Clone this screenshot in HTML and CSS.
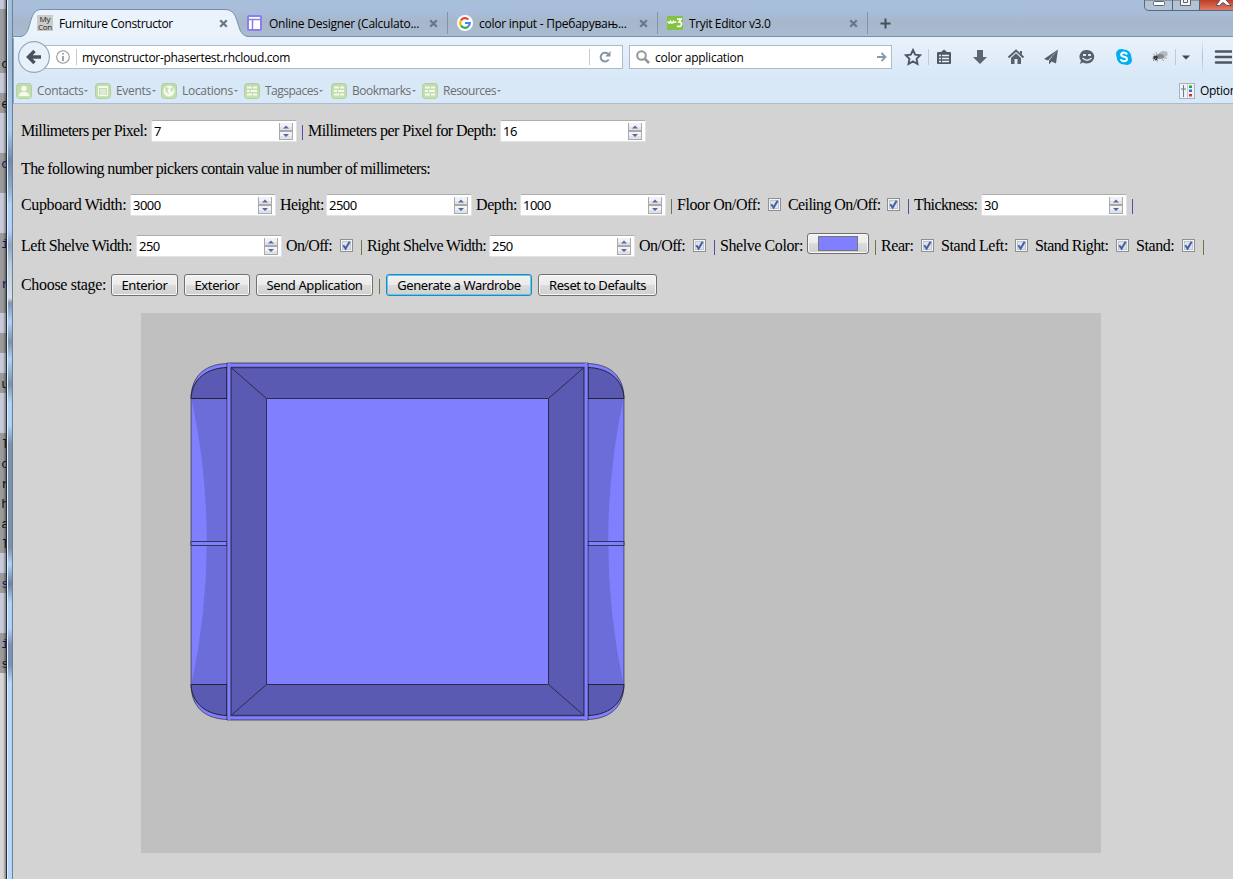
FILE: index.html
```html
<!DOCTYPE html>
<html lang="en">
<head>
<meta charset="utf-8">
<title>Furniture Constructor</title>
<link rel="stylesheet" href="styles.css">
</head>
<body>
<svg class="defs" width="0" height="0">
  <defs>
    <linearGradient id="green" x1="0" y1="0" x2="0" y2="1"><stop offset="0" stop-color="#c2d9b0"/><stop offset="1" stop-color="#c5e2ac"/></linearGradient>
    <symbol id="close" viewBox="0 0 9 9"><path d="M1.2 1.2L7.8 7.8M7.8 1.2L1.2 7.8" stroke="#66788a" stroke-width="2.2"/></symbol>
    <symbol id="list" viewBox="0 0 16 16"><rect x=".5" y=".5" width="15" height="15" rx="3" fill="url(#green)" stroke="#b1cea4"/><path d="M3 4.500h5M9 4.500h4M3 8h3M7 8h6M3 11.500h5M9 11.500h4" stroke="#f4faed" stroke-width="2"/></symbol>
    <symbol id="check" viewBox="0 0 13 13"><rect x=".5" y=".5" width="12" height="12" fill="#f4f4f4" stroke="#8e8f8f"/><rect x="2.500" y="2.500" width="8" height="8" fill="#dfe3ec" stroke="#bfc5d2"/><path d="M3.300 6.300L5.600 9.600L9.600 2.700" fill="none" stroke="#4660a4" stroke-width="2"/></symbol>
    <symbol id="spin" viewBox="0 0 14 17"><path d="M0 0h14v17h-14z" fill="#a9a9ad"/><path d="M1 0h12v7h-12zM1 9h12v7h-12z" fill="#f2f2f2"/><path d="M1 4h12v3h-12zM1 13h12v3h-12z" fill="#e2e2e4"/><path d="M4 5.500L7 2.500L10 5.500zM4 11L7 14L10 11z" fill="#5268ad"/></symbol>
  </defs>
</svg>
<div class="desktop">
  <div class="behind">
    <span class="code c1">c</span><span class="code c2">e</span><span class="code c3 navy">c</span><span class="code c4 navy">i</span><span class="code c5 navy">r</span><span class="code c6">u</span><span class="code c7">l</span><span class="code c8">c</span><span class="code c9">r</span><span class="code c10">h</span><span class="code c11">a</span><span class="code c12">l</span><span class="code c13 navy">s</span><span class="code c14 navy">i</span><span class="code c15">s</span>
  </div>
  <div class="edge"></div>
  <div class="browser">
    <div class="tabs">
      <svg class="tabshape" width="240" height="38" viewBox="0 0 240 38"><path d="M0 36.500H7C20 36.500 14 9.500 28 9.500H212C229 9.500 221 36.500 236 36.500V38H0Z" fill="#eaf2fb"/><path d="M0 36.500H7C20 36.500 14 9.500 28 9.500H212C229 9.500 221 36.500 236 36.500" fill="none" stroke="#768fac"/></svg>
      <div class="tab current"><span class="mycon"><span>My</span><span>Con</span></span><span class="title t1">Furniture Constructor</span><svg class="x"><use href="#close"/></svg></div>
      <div class="tab"><svg class="ico" viewBox="0 0 16 16"><rect x="1" y="1" width="13" height="14" rx="1" fill="#fff" stroke="#8d7fea" stroke-width="2"/><path d="M2 4.500H13M5.500 5V14" stroke="#8d7fea" stroke-width="1.500"/></svg><span class="title">Online Designer (Calculato...</span><svg class="x"><use href="#close"/></svg></div>
      <div class="tab"><svg class="ico" viewBox="0 0 16 16"><circle cx="8" cy="8" r="8" fill="#fff"/><g fill="none" stroke-width="2.200"><path d="M4 5.300A4.800 4.800 0 0 1 11.300 4.500" stroke="#ea4335"/><path d="M4 5.300A4.800 4.800 0 0 0 4 10.700" stroke="#fbbc05"/><path d="M4 10.700A4.800 4.800 0 0 0 11.200 11.500" stroke="#34a853"/><path d="M11.200 11.500A4.800 4.800 0 0 0 12.800 8H8" stroke="#4285f4"/></g></svg><span class="title">color input - Пребарувањ...</span><svg class="x"><use href="#close"/></svg></div>
      <div class="tab"><svg class="ico" viewBox="0 0 16 16"><rect y="1" width="16" height="14" rx="1" fill="#84c341"/><path d="M1 6.500Q2 9.500 3.500 6.500Q5 9.500 6.500 6.500Q8 8 9 6.500M10 4H14L12 7Q15 7 14.500 9.500Q13.500 12.500 10 11" fill="none" stroke="#fff" stroke-width="1.700"/></svg><span class="title t4">Tryit Editor v3.0</span><svg class="x"><use href="#close"/></svg></div>
      <svg class="plus" width="11" height="11" viewBox="0 0 11 11"><path d="M5.500 .5V10.500M.5 5.500H10.500" stroke="#44505e" stroke-width="2"/></svg>
      <svg class="wincontrols" width="90" height="11" viewBox="0 0 90 11"><defs><linearGradient id="red" x1="0" y1="0" x2="0" y2="1"><stop offset="0" stop-color="#bd3b27"/><stop offset="1" stop-color="#df7c63"/></linearGradient></defs><path d="M.5 0V6Q.5 10.500 5 10.500H90V0Z" fill="#b4c3d4" stroke="#59697a"/><path d="M55 0H90V10H55Z" fill="url(#red)"/><path d="M28.500 0V10M55.500 0V10" stroke="#56616d"/><rect x="9.500" y="1.500" width="11" height="4" rx="1" fill="#fff" stroke="#5a6470"/><path d="M36.500 0V5.500H46.500V0M39.500 0V2.500H43.500V0" fill="#f4f4f4" stroke="#5a6470"/><path d="M75.500 5.500L79 2.500L83 5.500H87L82 0L81 -2H77L76 0L72 5.500Z" fill="#fff" stroke="#5a5061"/></svg>
    </div>
    <div class="chrome">
      <div class="nav">
        <div class="urlbar">
          <svg class="info" width="14" height="14" viewBox="0 0 14 14"><circle cx="7" cy="7" r="6.300" fill="none" stroke="#969696" stroke-width="1.100"/><path d="M7 6V11M7 3V4.500" stroke="#858585" stroke-width="1.500"/></svg>
          <i class="vline"></i><span class="address">myconstructor-phasertest.rhcloud.com</span><i class="vline"></i>
          <svg class="reload" width="12" height="12" viewBox="0 0 12 12"><path d="M9.700 8.500A4.400 4.400 0 1 1 9 2.800" fill="none" stroke="#8296a5" stroke-width="2"/><path d="M11.500 0V5.500H6.200Z" fill="#8296a5"/></svg>
        </div>
        <svg class="back" width="32" height="32" viewBox="0 0 32 32"><circle cx="16" cy="16" r="15.400" fill="#e8f1fa" stroke="#94a8bd" stroke-width="1.200"/><path d="M23 16H12M16.500 10L10.500 16L16.500 22" fill="none" stroke="#46525f" stroke-width="3.400"/></svg>
        <div class="search"><svg width="14" height="14" viewBox="0 0 14 14"><circle cx="5.500" cy="5.500" r="4.300" fill="none" stroke="#969696" stroke-width="2"/><path d="M8.500 8.500L13 13" stroke="#969696" stroke-width="2.600"/></svg><span class="query">color application</span><svg width="10" height="10" viewBox="0 0 10 10"><path d="M0 5H8M4.500 1L8.500 5L4.500 9" fill="none" stroke="#8799aa" stroke-width="1.800"/></svg></div>
        <div class="tools">
          <svg viewBox="0 0 18 18"><path d="M9 2L11.200 6.600L16.200 7.300L12.600 10.800L13.500 16L9 13.400L4.500 16L5.400 10.800L1.800 7.300L6.800 6.600Z" fill="none" stroke="#4d5966" stroke-width="1.900"/></svg>
          <i class="vline"></i>
          <svg viewBox="0 0 18 18"><path d="M3 4H6L9 1.500L12 4H15Q16 4 16 5V15Q16 16 15 16H3Q2 16 2 15V5Q2 4 3 4Z" fill="#4d5966"/><path d="M4 7.500H6M7 7.500H14M4 10.500H6M7 10.500H14M4 13.500H6M7 13.500H14" stroke="#e9f1f9" stroke-width="1.700"/></svg>
          <svg viewBox="0 0 18 18"><path d="M6 2H12V9H16L9 16L2 9H6Z" fill="#5a6570"/></svg>
          <svg viewBox="0 0 18 18"><path d="M1.500 9.500L9 2.500L16.500 9.500" fill="none" stroke="#56616d" stroke-width="2"/><path d="M4 10L9 5.300L14 10V16H10.500V11H7.500V16H4ZM13 3H15V7L13 5Z" fill="#56616d"/></svg>
          <svg viewBox="0 0 18 18"><path d="M16 1.500L2 11L6 12.500ZM16 1.500L7 12.500V16.500L9.500 13.500L14 15.500Z" fill="#56616d"/></svg>
          <svg viewBox="0 0 18 18"><path d="M9 2A7 6.500 0 0 1 9 15.500Q6.500 15.500 5 14.500L2 16L3 12.500A7 6.500 0 0 1 9 2Z" fill="#56616d"/><path d="M5 6H8V8H5ZM10 6H13V8H10Z" fill="#dce6ef"/><path d="M4.500 10Q9 14.500 13.500 10" fill="none" stroke="#dce6ef" stroke-width="1.400"/></svg>
          <svg class="skype" viewBox="0 0 18 18"><circle cx="6" cy="6" r="5" fill="#00aff0"/><circle cx="12" cy="12" r="5" fill="#00aff0"/><circle cx="9" cy="9" r="7.400" fill="#00aff0"/><path d="M12 6.500Q11.200 4.500 8.900 4.500Q6.200 4.600 6.200 6.700Q6.300 8.200 9 8.700Q12 9.200 12 11.200Q11.700 13.300 9 13.300Q6.500 13.200 5.900 11.200" fill="none" stroke="#fff" stroke-width="2.100"/></svg>
          <svg viewBox="0 0 18 18"><ellipse cx="12" cy="6.500" rx="5" ry="3.300" fill="#b6b9bd" transform="rotate(-15 12 7)"/><ellipse cx="9" cy="8.500" rx="4" ry="2.500" fill="#85878c"/><circle cx="4.500" cy="10" r="2.400" fill="#33363a"/><path d="M2 6L5 8M2 13L5 10M7 10L6 14M9 9L13 13M13 10H16M6 7L5 4M1 10H3" stroke="#a0a3a8"/></svg>
          <i class="vline"></i>
          <svg class="drop" width="8" height="5" viewBox="0 0 8 5"><path d="M0 .5H8L4 4.500Z" fill="#3c4650"/></svg>
          <i class="longline"></i>
          <svg viewBox="0 0 18 18"><path d="M2 3.500H18M2 9H18M2 14.500H18" stroke="#4c5763" stroke-width="2.600" stroke-linecap="round"/></svg>
        </div>
      </div>
      <div class="bookmarks">
        <span class="bm b1"><svg viewBox="0 0 16 16"><rect x=".5" y=".5" width="15" height="15" rx="3" fill="url(#green)" stroke="#b1cea4"/><circle cx="8" cy="5.500" r="2.700" fill="#f4faed"/><path d="M3 13V11L6 9H10L13 11V13Z" fill="#f4faed"/></svg><b>Contacts</b><i class="arrow"></i></span>
        <span class="bm b2"><svg viewBox="0 0 16 16"><rect x=".5" y=".5" width="15" height="15" rx="3" fill="url(#green)" stroke="#b1cea4"/><rect x="3.500" y="3.500" width="9" height="9" fill="none" stroke="#f4faed"/><path d="M4 4.500H12M5 7H11M5 9H11M5 11H11" stroke="#f4faed"/></svg><b>Events</b><i class="arrow"></i></span>
        <span class="bm b3"><svg viewBox="0 0 16 16"><rect x=".5" y=".5" width="15" height="15" rx="3" fill="url(#green)" stroke="#b1cea4"/><circle cx="8" cy="8" r="5.600" fill="#f4faed"/><path d="M5 4L8 5L6.500 7.500L8 11L6 10L4 7ZM11 4L9 7L11 9L12.500 6Z" fill="#c6dfb2"/></svg><b>Locations</b><i class="arrow"></i></span>
        <span class="bm b4"><svg><use href="#list"/></svg><b>Tagspaces</b><i class="arrow"></i></span>
        <span class="bm b5"><svg><use href="#list"/></svg><b>Bookmarks</b><i class="arrow"></i></span>
        <span class="bm b6"><svg><use href="#list"/></svg><b>Resources</b><i class="arrow"></i></span>
        <span class="bm options"><svg viewBox="0 0 16 16"><rect x=".5" y=".5" width="15" height="15" fill="#eef1f5" stroke="#a7b2be"/><path d="M4.500 2V14M2 6H7" stroke="#727a82"/><path d="M8.500 1V15" stroke="#c8ced6"/><path d="M10 2.500H13V5H10Z" fill="#28a32b"/><path d="M10 6.500H13V9H10Z" fill="#287ad0"/><path d="M10 11H13V13.500H10Z" fill="#df3029"/></svg><b>Options</b></span>
      </div>
    </div>
    <main class="page">
      <div class="row scale"><label>Millimeters per Pixel:</label><span class="num">7<svg><use href="#spin"/></svg></span><i class="bar"></i><label class="wide">Millimeters per Pixel for Depth:</label><span class="num">16<svg><use href="#spin"/></svg></span></div>
      <div class="row note"><label>The following number pickers contain value in number of millimeters:</label></div>
      <div class="row sizes"><label class="wide">Cupboard Width:</label><span class="num">3000<svg><use href="#spin"/></svg></span><label class="tight">Height:</label><span class="num">2500<svg><use href="#spin"/></svg></span><label>Depth:</label><span class="num">1000<svg><use href="#spin"/></svg></span><i class="bar"></i><label>Floor On/Off:</label><svg class="cb"><use href="#check"/></svg><label class="tight">Ceiling On/Off:</label><svg class="cb"><use href="#check"/></svg><i class="bar blue"></i><label class="tight">Thickness:</label><span class="num">30<svg><use href="#spin"/></svg></span><i class="bar blue"></i></div>
      <div class="row shelves"><label class="tight">Left Shelve Width:</label><span class="num">250<svg><use href="#spin"/></svg></span><label class="tight">On/Off:</label><svg class="cb"><use href="#check"/></svg><i class="bar"></i><label class="tight">Right Shelve Width:</label><span class="num">250<svg><use href="#spin"/></svg></span><label class="tight">On/Off:</label><svg class="cb"><use href="#check"/></svg><i class="bar blue"></i><label>Shelve Color:</label><span class="btn color"><i class="swatch"></i></span><i class="bar"></i><label>Rear:</label><svg class="cb"><use href="#check"/></svg><label>Stand Left:</label><svg class="cb"><use href="#check"/></svg><label class="tight">Stand Right:</label><svg class="cb"><use href="#check"/></svg><label>Stand:</label><svg class="cb"><use href="#check"/></svg><i class="bar"></i></div>
      <div class="row stage"><label>Choose stage:</label><span class="btn">Enterior</span><span class="btn">Exterior</span><span class="btn">Send Application</span><i class="bar"></i><span class="btn focus">Generate a Wardrobe</span><span class="btn">Reset to Defaults</span></div>
      <svg class="canvas" width="960" height="540" viewBox="141 313 960 540">
        <defs>
          <g id="wing">
            <path d="M191 399C191 375 206 363.500 229 363.500V719.500C206 719.500 191 708 191 684Z" fill="#8080ff" stroke="#000" stroke-opacity=".5"/>
            <path d="M191.500 398.500Q222 541 191.500 684.500H227V398.500Z" fill="#6d6dd9"/>
            <path d="M191 398.500C192 378 208 368 227 367.500V398.500ZM191 684.500C192 705 208 715 227 715.500V684.500Z" fill="#5a5ab2" stroke="#222238"/>
            <path d="M191 541.500H227V545.500H191Z" fill="#8080ff" stroke="#333360"/>
          </g>
        </defs>
        <use href="#wing"/><use href="#wing" transform="translate(815 0) scale(-1 1)"/>
        <path d="M227 363H588V720H227Z" fill="#8080ff" stroke="#000" stroke-opacity=".55"/>
        <path d="M231 367.500H584V715.500H231Z" fill="#5a5ab2" stroke="#343462" stroke-width="1.500"/>
        <path d="M231 367.500L266.500 398.500M584 367.500L548.500 398.500M231 715.500L266.500 684.500M584 715.500L548.500 684.500" stroke="#2b2b50"/>
        <path d="M266.500 398.500H548.500V684.500H266.500Z" fill="#8080ff" stroke="#2b2b50"/>
        <path d="M229 363V720M586 363V720" stroke="#8080ff" stroke-width="2.500"/>
      </svg>
    </main>
  </div>
</div>
</body>
</html>
```

FILE: styles.css
```css
* { box-sizing: border-box; }
body { margin: 0; width: 1233px; height: 879px; overflow: hidden; background: #d3d3d3; }
svg { display: block; flex: none; }
.defs { position: absolute; }
.desktop { display: flex; width: 1233px; height: 879px; overflow: hidden; }
.behind { position: relative; flex: none; width: 7px; overflow: hidden; background: linear-gradient(90deg, transparent 3px, rgba(0,0,0,.5)), linear-gradient(#c4c8d8 9px, #9b9da0 9px 73px, #c9cad7 73px 93px, #9b9b9b 93px 113px, #c9cad7 113px 153px, #9b9b9b 153px 193px, #c9cad7 193px 233px, #9b9b9b 233px 313px, #c9cad7 313px 333px, #9b9b9b 333px 353px, #c9cad7 353px 373px, #9b9b9b 373px 393px, #c9cad7 393px 433px, #9b9b9b 433px 553px, #c9cad7 553px 573px, #9b9b9b 573px 593px, #c9cad7 593px 633px, #9b9b9b 633px 673px, #d6d6d6 673px); }
.code { position: absolute; right: -2px; font: 13px/16px "Liberation Mono", monospace; color: #161010; }
.navy { color: #181060; }
.c1 { top: 57px; } .c2 { top: 97px; } .c3 { top: 157px; } .c4 { top: 237px; } .c5 { top: 277px; }
.c6 { top: 377px; } .c7 { top: 437px; } .c8 { top: 457px; } .c9 { top: 477px; } .c10 { top: 497px; }
.c11 { top: 517px; } .c12 { top: 537px; } .c13 { top: 577px; } .c14 { top: 637px; } .c15 { top: 657px; }
.edge { flex: none; width: 6px; border-left: 1px solid #e3f0fc; border-right: 1px solid #6b8299; background: linear-gradient(#a5bfda 0, #9eb7d0 60px, #a9caf0 130px, #7188ab 160px, #8ca6c3 185px, #b1d2f8 205px 230px, #8ba5c3 245px, #bccbd9 265px, #d5dde5 298px, #7e95ad 303px, #afd1f8 322px, #7b91aa 342px, #afd1f8 359px, #7b91aa 384px, #afd1f8 402px 425px, #7b91aa 444px 548px, #afd1f8 564px, #6e82ab 584px, #afd1f8 602px 628px, #7b91b3 645px 665px, #b5d7fb 682px); box-shadow: -1px 0 #202c3a; position: relative; }
.browser { width: 1220px; flex: none; font: 12px/16px "Open Sans", "Noto Sans", sans-serif; color: #000; }
.tabs { position: relative; display: flex; height: 37px; padding-left: 15px; background: linear-gradient(#a8bfda 0, #a8bedb 10px, #a6b7cb 22px, #a9bbd0 36px); border-bottom: 1px solid #768fac; }
.tabshape { position: absolute; left: 0; top: 0; z-index: 1; }
.tab { position: relative; flex: none; display: flex; align-items: center; width: 210px; height: 22px; margin-top: 12px; padding: 0 9px; border-right: 1px solid #8393a6; }
.tab.current { z-index: 2; border-right-color: transparent; }
.ico { width: 16px; height: 16px; }
.mycon { display: flex; flex-direction: column; align-items: center; width: 16px; height: 16px; background: #cbcbc9; font: 8px/8px "Open Sans", sans-serif; color: #222; letter-spacing: -.2px; }
.title { flex: none; width: 160px; margin-left: 6px; padding-top: 1px; white-space: nowrap; letter-spacing: -.25px; }
.t1 { letter-spacing: -.38px; }
.t4 { letter-spacing: -.35px; }
.x { width: 9px; height: 9px; margin-left: -.5px; }
.plus { margin: 18px 0 0 12px; }
.wincontrols { position: absolute; right: -1px; top: 0; }
.chrome { height: 67px; background: linear-gradient(#e9f2fb, #d9e8f7 60%); border-bottom: 1px solid #a6bdd3; border-left: 1px solid #8ea3ba; overflow: hidden; }
.nav { position: relative; display: flex; align-items: center; height: 40px; padding-left: 31px; }
.nav > * { flex: none; }
.back { position: absolute; left: 4px; top: 4px; }
.urlbar, .search { display: flex; align-items: center; height: 24px; background: #fff; border: 1px solid #a9bccf; }
.urlbar { width: 578px; padding-left: 10px; }
.vline { width: 1px; height: 16px; background: #c3c9d0; flex: none; }
.info { margin-right: 6px; }
.address { flex: none; width: 512px; padding: 1px 0 0 5px; white-space: nowrap; letter-spacing: -.3px; }
.reload { margin-left: 9px; }
.search { width: 263px; margin-left: 6px; padding: 0 4px 0 6px; }
.query { flex: 1; padding: 1px 0 0 5px; letter-spacing: -.25px; }
.tools { display: flex; align-items: center; padding-left: 12px; }
.tools > svg { width: 18px; height: 18px; margin-right: 18px; }
.tools > .vline { margin-right: 6px; }
.tools > svg:nth-child(1), .tools > svg:nth-child(9) { margin-right: 6px; }
.tools > svg:nth-child(7) { margin-right: 19px; }
.tools > svg:nth-child(5) { margin-right: 17px; }
.tools > .drop { width: 8px; height: 5px; margin: 0 12px 0 0; }
.longline { width: 1px; height: 38px; margin-right: 11px; background: linear-gradient(transparent, #b0c0d0, transparent); }
.bookmarks { display: flex; align-items: center; height: 26px; padding: 1px 0 0 2px; color: #6c6e70; }
.bm { display: flex; align-items: center; flex: none; height: 18px; }
.bm svg { width: 16px; height: 16px; margin-right: 5px; }
.bm b { font-weight: normal; white-space: nowrap; letter-spacing: -.3px; padding-top: 1px; }
.b1 { width: 79px; } .b2 { width: 66px; } .b3 { width: 83px; } .b4 { width: 87px; } .b5 { width: 91px; } .b6 { width: 757px; }
.bm.b4 b, .bm.b5 b, .bm.b6 b { letter-spacing: -.5px; }
.arrow { border: 2px solid transparent; border-top-color: #837e7c; border-bottom: 0; margin-left: 1px; }
.options { color: #000; }
.page { height: 775px; padding: 16px 0 0 8px; background: #d3d3d3; display: flex; flex-direction: column; }
.row { display: grid; align-items: center; font: 16px/20px "Liberation Serif", serif; letter-spacing: -.42px; }
.row label { white-space: nowrap; }
.tight { letter-spacing: -.6px; }
.sizes .wide { letter-spacing: -.35px; }
.scale .wide { letter-spacing: -.56px; }
.scale { height: 22px; grid-template-columns: 130px 151px 6px 192px 146px; letter-spacing: -.65px; }
.note { height: 20px; margin-top: 17px; letter-spacing: -.63px; }
.sizes { height: 22px; margin-top: 15px; grid-template-columns: 109px 150px 46px 150px 44px 151px 6px 91px 20px 99px 21px 6px 67px 151px 2px; }
.shelves { height: 22px; margin-top: 19px; grid-template-columns: 115px 150px 54px 21px 6px 122px 150px 54px 21px 6px 87px 68px 6px 40px 20px 74px 20px 81px 20px 46px 21px 2px; }
.stage { height: 22px; margin-top: 17px; grid-template-columns: 90px 73px 72px 123px 7px 152px 119px; }
.stage label { letter-spacing: -.32px; }
.num { position: relative; display: flex; align-items: center; justify-content: space-between; width: 146px; height: 22px; padding: 0 3px 0 2px; background: #fff; border: 1px solid #e2e3ea; border-top-color: #abadb3; border-radius: 2px; font: 13px/18px "Noto Sans", "Open Sans", sans-serif; letter-spacing: -.5px; }
.num svg { width: 14px; height: 17px; }
.bar { width: 1px; height: 15px; background: #76733b; margin-top: 2px; }
.bar.blue, .scale .bar { background: #5151a0; }
.cb { width: 13px; height: 13px; margin-top: -2px; }
.btn { display: flex; align-items: center; justify-content: center; height: 22px; border: 1px solid #707070; border-radius: 3px; background: linear-gradient(#f2f2f2, #ebebeb 49%, #dcdcdc 50%, #cfcfcf); box-shadow: inset 0 0 0 1px #f7f7f7; font: 13px/18px "Noto Sans", "Open Sans", sans-serif; letter-spacing: -.4px; white-space: nowrap; }
.stage .btn { margin-right: 6px; }
.stage .btn:last-child { margin-right: 0; }
.btn.focus { border-color: #3c7fb1; box-shadow: inset 0 0 0 1px #46d2fb; }
.color { width: 62px; height: 21px; margin-top: -5px; }
.swatch { width: 40px; height: 15px; border: 1px solid #777; background: #8080ff; }
.canvas { margin: 17px 0 0 120px; background: #c0c0c0; }
```
